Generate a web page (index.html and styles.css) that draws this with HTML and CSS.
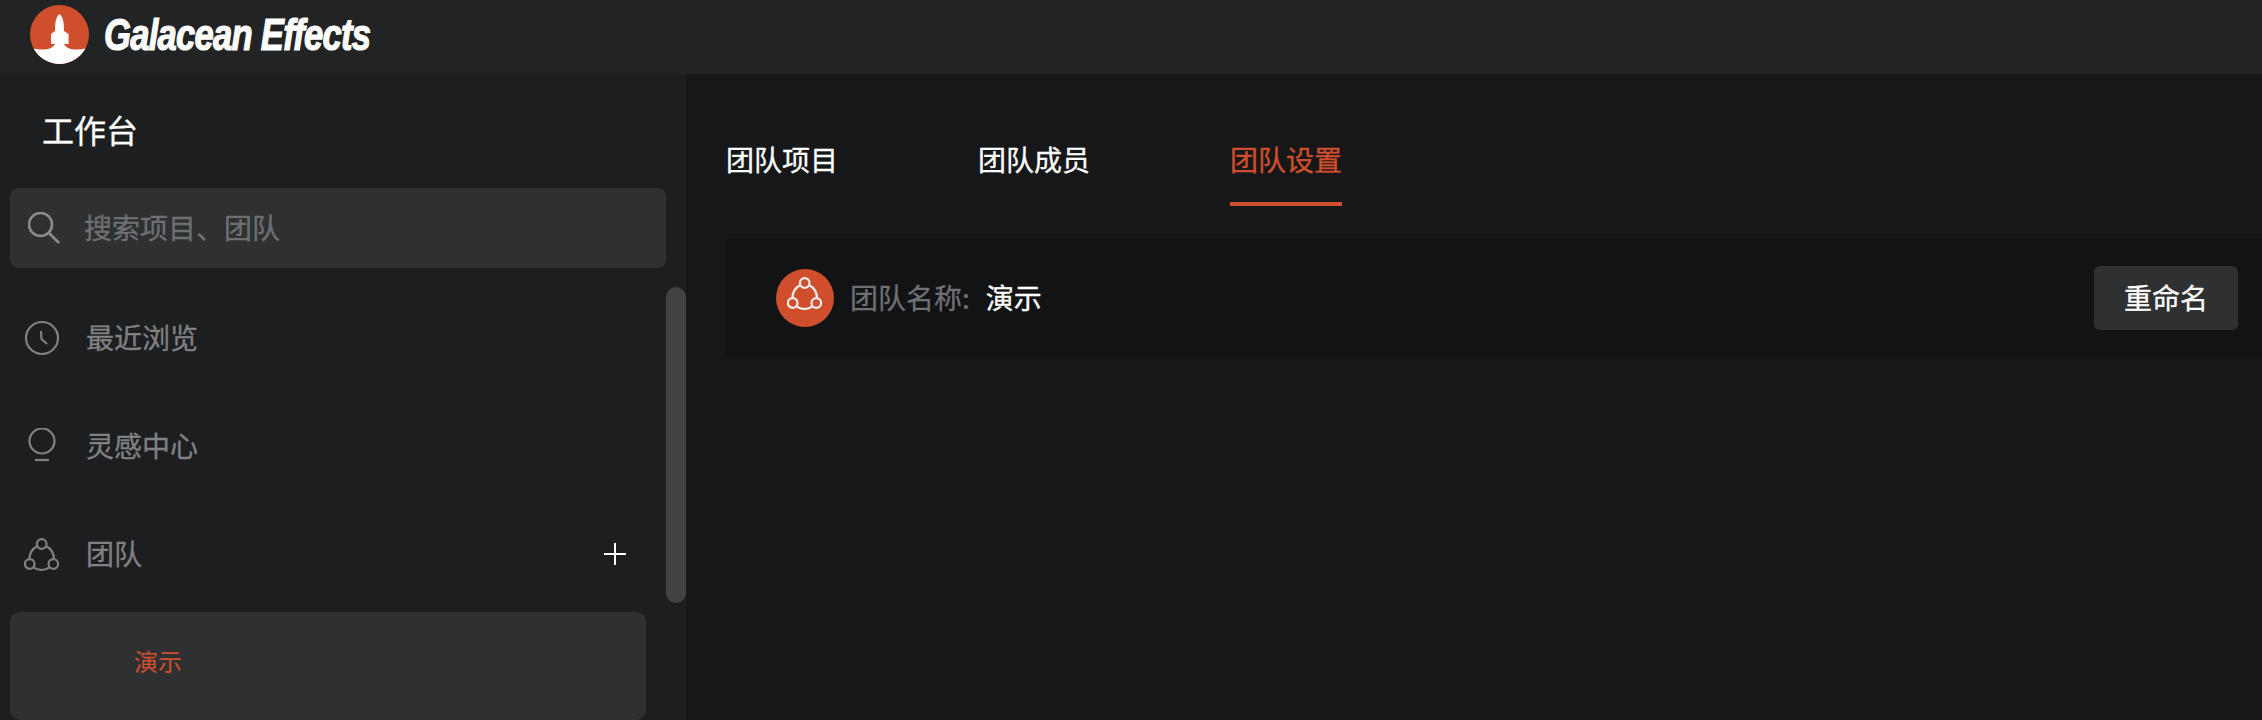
FILE: index.html
```html
<!DOCTYPE html>
<html lang="zh-CN">
<head>
    <meta charset="UTF-8">
    <meta name="viewport" content="width=device-width, initial-scale=1.0">
    <title>Galacean Effects</title>
    <link rel="stylesheet" href="styles.css">
</head>
<body>
    <svg class="defs" width="0" height="0">
        <symbol id="team-icon" viewBox="0 -1 36 34">
            <circle cx="17.7" cy="6" r="4.8"/>
            <circle cx="5.7" cy="26" r="4.8"/>
            <circle cx="29.3" cy="26" r="4.8"/>
            <path d="M22 8 A15 15 0 0 1 30 21.2"/>
            <path d="M13.4 8 A15 15 0 0 0 5.4 21.2"/>
            <path d="M9.4 29.4 A14 14 0 0 0 25.6 29.4"/>
        </symbol>
    </svg>

    <header class="topbar">
        <svg class="logo" viewBox="0 0 59 59">
            <circle cx="29.5" cy="29.5" r="29.5" fill="#cf4f2c"/>
            <path fill="#fff" d="M3.6 43.6 C14 46 24 44 25.4 38 L33.6 38 C35 44 45 46 55.4 43.6 A29.5 29.5 0 0 1 3.6 43.6 Z"/>
            <path fill="#fff" d="M29.5 9 C32 11 33.6 15 33.8 20 L34 26 L38.6 29 L38.6 39 L33 39 L33 41 L26 41 L26 39 L21 39 L21 29 L25 26 L25.2 20 C25.4 15 27 11 29.5 9 Z"/>
        </svg>
        <span class="brand">Galacean Effects</span>
    </header>

    <div class="layout">
        <aside class="sidebar">
            <div class="sidebar-title">工作台</div>

            <div class="search">
                <svg class="search-icon" viewBox="0 0 32 32">
                    <circle cx="12.5" cy="12.5" r="11.5"/>
                    <path d="M21 21 L31 31"/>
                </svg>
                <span>搜索项目、团队</span>
            </div>

            <nav>
                <div class="nav-item">
                    <svg class="nav-icon" viewBox="0 0 36 36">
                        <circle cx="18" cy="18" r="16"/>
                        <path d="M17 11 L17.5 19 L23 24"/>
                    </svg>
                    <span>最近浏览</span>
                </div>
                <div class="nav-item">
                    <svg class="nav-icon" viewBox="0 0 36 36">
                        <circle cx="18" cy="13" r="12.5"/>
                        <path d="M11 32 L25 32"/>
                    </svg>
                    <span>灵感中心</span>
                </div>
                <div class="nav-item">
                    <svg class="nav-icon"><use href="#team-icon"/></svg>
                    <span>团队</span>
                    <svg class="add-icon" viewBox="0 0 22 22"><path d="M11 0 V22 M0 11 H22"/></svg>
                </div>
                <div class="team-item">演示</div>
            </nav>

            <div class="scroll-thumb"></div>
        </aside>

        <main class="content">
            <div class="tabs">
                <div class="tab">团队项目</div>
                <div class="tab">团队成员</div>
                <div class="tab active">团队设置</div>
            </div>

            <section class="team-card">
                <div class="avatar">
                    <svg class="avatar-icon"><use href="#team-icon"/></svg>
                </div>
                <span class="team-label">团队名称:</span>
                <span class="team-name">演示</span>
                <button class="rename-btn">重命名</button>
            </section>
        </main>
    </div>
</body>
</html>
```

FILE: styles.css
```css
body {
    margin: 0;
    height: 720px;
    overflow: hidden;
    display: flex;
    flex-direction: column;
    font-family: "Noto Sans CJK SC", "Liberation Sans", sans-serif;
    font-size: 28px;
    -webkit-text-stroke: 0.3px;
    color: #ffffff;
    background: #161719;
}

.defs {
    position: absolute;
}

.topbar {
    height: 74px;
    flex-shrink: 0;
    display: flex;
    align-items: center;
    padding-left: 30px;
    background: #222325;
}

.logo {
    width: 59px;
    height: 59px;
    margin-top: -5px;
}

.brand {
    margin-left: 15px;
    margin-top: -5px;
    font-family: "Liberation Sans", sans-serif;
    font-size: 45px;
    font-weight: 700;
    font-style: italic;
    letter-spacing: -1px;
    -webkit-text-stroke: 1.2px #ffffff;
    white-space: nowrap;
    transform: scaleX(0.77);
    transform-origin: left center;
}

.layout {
    flex: 1;
    display: flex;
    min-height: 0;
}

.sidebar {
    position: relative;
    width: 686px;
    flex-shrink: 0;
    box-sizing: border-box;
    padding: 0 20px 0 10px;
    overflow: hidden;
    background: #1d1e20;
}

.sidebar-title {
    height: 114px;
    display: flex;
    align-items: center;
    box-sizing: border-box;
    padding: 0 0 5px 32px;
    font-size: 32px;
}

.search {
    height: 80px;
    display: flex;
    align-items: center;
    padding-left: 18px;
    gap: 24px;
    margin-bottom: 16px;
    border-radius: 8px;
    background: #2f3032;
    color: #6f7072;
}

.search span {
    margin-top: -2px;
}

.search-icon {
    width: 32px;
    height: 32px;
    fill: none;
    stroke: #8a8b8c;
    stroke-width: 2.6;
}

.nav-item {
    height: 108px;
    display: flex;
    align-items: center;
    width: 636px;
    box-sizing: border-box;
    padding-left: 14px;
    gap: 26px;
    color: #808183;
}

.nav-item span {
    margin-top: -2px;
}

.nav-icon {
    width: 36px;
    height: 36px;
    fill: none;
    stroke: #808183;
    stroke-width: 2.2;
}

.add-icon {
    width: 22px;
    height: 22px;
    margin-left: auto;
    margin-right: 20px;
    fill: none;
    stroke: #ffffff;
    stroke-width: 2;
}

.team-item {
    width: 636px;
    height: 108px;
    margin-top: 4px;
    display: flex;
    align-items: center;
    box-sizing: border-box;
    padding: 0 0 12px 124px;
    border-radius: 10px;
    background: #2f3032;
    color: #cf4f2c;
    font-size: 24px;
    -webkit-text-stroke: 0;
}

.scroll-thumb {
    position: absolute;
    top: 213px;
    right: 0;
    width: 20px;
    height: 316px;
    border-radius: 10px;
    background: #414244;
}

.content {
    flex: 1;
    min-width: 0;
    padding: 63px 0 0 40px;
}

.tabs {
    display: flex;
    gap: 140px;
    margin-bottom: 32px;
}

.tab {
    line-height: 44px;
    padding-bottom: 21px;
    border-bottom: 4px solid transparent;
}

.tab.active {
    color: #cf4f2c;
    border-bottom-color: #cf4f2c;
}

.team-card {
    height: 120px;
    display: flex;
    align-items: center;
    padding: 0 24px 0 50px;
    background: #121315;
}

.avatar {
    width: 58px;
    height: 58px;
    display: flex;
    align-items: center;
    justify-content: center;
    border-radius: 50%;
    background: #cf4f2c;
}

.avatar-icon {
    width: 36px;
    height: 34px;
    margin-bottom: 10px;
    fill: none;
    stroke: #eeeeee;
    stroke-width: 2.2;
}

.team-label {
    margin: -2px 0 0 16px;
    color: #6f7072;
}

.team-name {
    margin: -2px 0 0 16px;
}

.rename-btn {
    width: 144px;
    height: 64px;
    margin-left: auto;
    padding: 0 0 2px;
    border: none;
    border-radius: 6px;
    background: #2f3032;
    color: #ffffff;
    font-family: inherit;
    font-size: 28px;
}
```
